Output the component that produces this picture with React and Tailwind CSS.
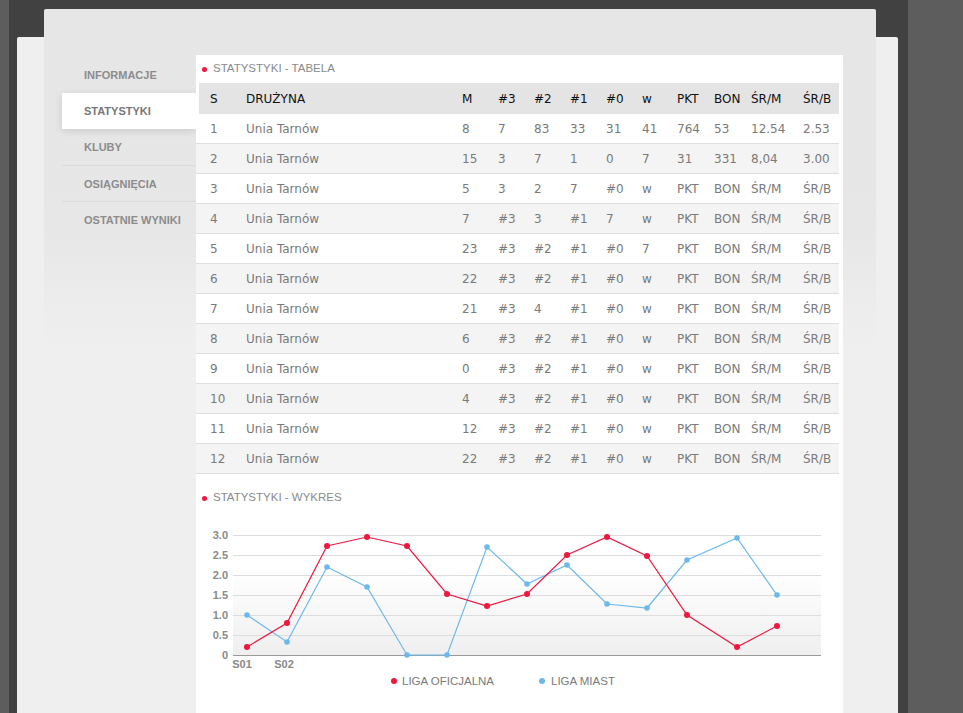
import React from "react";

const MENU = [
  { label: "INFORMACJE" },
  { label: "STATYSTYKI", active: true },
  { label: "KLUBY" },
  { label: "OSIĄGNIĘCIA", line: true },
  { label: "OSTATNIE WYNIKI", line: true },
];

const HEAD = ["S", "DRUŻYNA", "M", "#3", "#2", "#1", "#0", "w", "PKT", "BON", "ŚR/M", "ŚR/B"];

const ROWS = [
  ["1", "Unia Tarnów", "8", "7", "83", "33", "31", "41", "764", "53", "12.54", "2.53"],
  ["2", "Unia Tarnów", "15", "3", "7", "1", "0", "7", "31", "331", "8,04", "3.00"],
  ["3", "Unia Tarnów", "5", "3", "2", "7", "#0", "w", "PKT", "BON", "ŚR/M", "ŚR/B"],
  ["4", "Unia Tarnów", "7", "#3", "3", "#1", "7", "w", "PKT", "BON", "ŚR/M", "ŚR/B"],
  ["5", "Unia Tarnów", "23", "#3", "#2", "#1", "#0", "7", "PKT", "BON", "ŚR/M", "ŚR/B"],
  ["6", "Unia Tarnów", "22", "#3", "#2", "#1", "#0", "w", "PKT", "BON", "ŚR/M", "ŚR/B"],
  ["7", "Unia Tarnów", "21", "#3", "4", "#1", "#0", "w", "PKT", "BON", "ŚR/M", "ŚR/B"],
  ["8", "Unia Tarnów", "6", "#3", "#2", "#1", "#0", "w", "PKT", "BON", "ŚR/M", "ŚR/B"],
  ["9", "Unia Tarnów", "0", "#3", "#2", "#1", "#0", "w", "PKT", "BON", "ŚR/M", "ŚR/B"],
  ["10", "Unia Tarnów", "4", "#3", "#2", "#1", "#0", "w", "PKT", "BON", "ŚR/M", "ŚR/B"],
  ["11", "Unia Tarnów", "12", "#3", "#2", "#1", "#0", "w", "PKT", "BON", "ŚR/M", "ŚR/B"],
  ["12", "Unia Tarnów", "22", "#3", "#2", "#1", "#0", "w", "PKT", "BON", "ŚR/M", "ŚR/B"],
];

const COLS = "grid grid-cols-[36px_216px_36px_36px_36px_36px_36px_35px_37px_37px_52px_1fr] items-center";

// chart data, already in svg pixel coords
const XS = [51, 91, 131, 171, 211, 251, 291, 331, 371, 411, 451, 491, 541, 581];
const RED = [137, 113, 36, 27, 36, 84, 96, 84, 45, 27, 46, 105, 137, 116];
const BLUE = [105, 132, 57, 77, 145, 145, 37, 74, 55, 94, 98, 50, 28, 85];
const RED_C = "#f0173f";
const BLUE_C = "#6db8ec";

function SectionTitle({ children, h = "h-[28px]" }) {
  return (
    <div className={h + " flex items-center pl-[6px] font-['Liberation_Sans',Arial,sans-serif] text-[11.5px] text-[#8a8a8a]"}>
      <span className="w-[5px] h-[5px] rounded-full bg-[#f0173f]" />
      <span className="ml-[6px] -mt-[1px]">{children}</span>
    </div>
  );
}

function Chart() {
  const grid = [
    ["3.0", 25],
    ["2.5", 45],
    ["2.0", 65],
    ["1.5", 85],
    ["1.0", 105],
    ["0.5", 125],
    ["0", 145],
  ];
  const pts = (ys) => XS.map((x, i) => `${x},${ys[i]}`).join(" ");
  return (
    <svg width="647" height="190" className="block font-['Liberation_Sans',Arial,sans-serif]">
      <defs>
        <linearGradient id="plotbg" x1="0" y1="0" x2="0" y2="1">
          <stop offset="0" stopColor="#ffffff" />
          <stop offset="0.3" stopColor="#ffffff" />
          <stop offset="1" stopColor="#efefef" />
        </linearGradient>
      </defs>
      <rect x="37" y="25" width="588" height="120" fill="url(#plotbg)" />
      {grid.map(([l, y]) => (
        <g key={l}>
          <line x1="37" x2="625" y1={y + 0.5} y2={y + 0.5} stroke={y === 145 ? "#9a9a9a" : "#dddddd"} strokeWidth="1" />
          <text x="32" y={y + 4} textAnchor="end" fontSize="11" fontWeight="bold" fill="#8a8a8a">{l}</text>
        </g>
      ))}
      <text x="46" y="158" textAnchor="middle" fontSize="11" fontWeight="bold" fill="#8a8a8a">S01</text>
      <text x="88" y="158" textAnchor="middle" fontSize="11" fontWeight="bold" fill="#8a8a8a">S02</text>

      <polyline points={pts(BLUE)} fill="none" stroke={BLUE_C} strokeWidth="1.2" />
      {XS.map((x, i) => (
        <circle key={"b" + i} cx={x} cy={BLUE[i]} r="2.8" fill={BLUE_C} />
      ))}
      <polyline points={pts(RED)} fill="none" stroke={RED_C} strokeWidth="1.2" />
      {XS.map((x, i) => (
        <circle key={"r" + i} cx={x} cy={RED[i]} r="3" fill={RED_C} />
      ))}

      <circle cx="198" cy="171" r="3" fill={RED_C} />
      <text x="206" y="175" fontSize="11.5" fill="#7a7a7a">LIGA OFICJALNA</text>
      <circle cx="346" cy="171" r="3" fill={BLUE_C} />
      <text x="355" y="175" fontSize="11.5" fill="#7a7a7a">LIGA MIAST</text>
    </svg>
  );
}

export default function App() {
  return (
    <div className="min-h-screen bg-[#5d5d5d] overflow-hidden">
      <div className="ml-[9px] w-[899px] min-h-[713px] bg-[#414141] pt-[37px] pl-[8px] pr-[10px]">
        <div className="flow-root w-[881px] min-h-[676px] bg-[#eeefee] rounded-t-[2px]">
          <div className="-mt-[28px] ml-[27px] w-[832px] flex pt-[46px] pl-[18px] rounded-t-[2px] bg-[linear-gradient(to_bottom,#e6e6e6_0px,#e7e7e7_220px,#eeefee_335px)]">
            {/* side menu */}
            <nav className="w-[134px] mt-[2px] font-['Liberation_Sans',Arial,sans-serif]">
              {MENU.map((m) => (
                <div
                  key={m.label}
                  className={
                    "h-[36px] flex items-center pl-[22px] text-[11px] font-bold " +
                    (m.active
                      ? "bg-white text-[#777] shadow-[0_2px_8px_rgba(0,0,0,0.12)] relative"
                      : "text-[#8c8c8c]") +
                    (m.line ? " border-t border-[#dcdcdc]" : "")
                  }
                >
                  <span className="mt-[1px]">{m.label}</span>
                </div>
              ))}
            </nav>

            {/* content */}
            <div className="w-[647px] bg-white pb-[40px] relative">
              <SectionTitle>STATYSTYKI - TABELA</SectionTitle>
              <div className="font-['DejaVu_Sans',Verdana,sans-serif] text-[12px] pr-[4px]">
                <div className="pl-[3px]">
                  <div className={COLS + " h-[31px] bg-[#e4e4e4] text-[#111] pl-[11px]"}>
                    {HEAD.map((h) => (
                      <div key={h}>{h}</div>
                    ))}
                  </div>
                </div>
                {ROWS.map((r, i) => (
                  <div
                    key={i}
                    className={
                      COLS +
                      " h-[30px] pl-[14px] pt-[1px] text-[#7a7a7a] border-b border-[#dedede] " +
                      (i % 2 === 1 ? "bg-[#f4f4f4]" : "bg-white")
                    }
                  >
                    {r.map((c, j) => (
                      <div key={j}>{c}</div>
                    ))}
                  </div>
                ))}
              </div>
              <div className="mt-[12px]">
                <SectionTitle h="h-[24px]">STATYSTYKI - WYKRES</SectionTitle>
              </div>
              <Chart />
            </div>
          </div>
        </div>
      </div>
    </div>
  );
}
